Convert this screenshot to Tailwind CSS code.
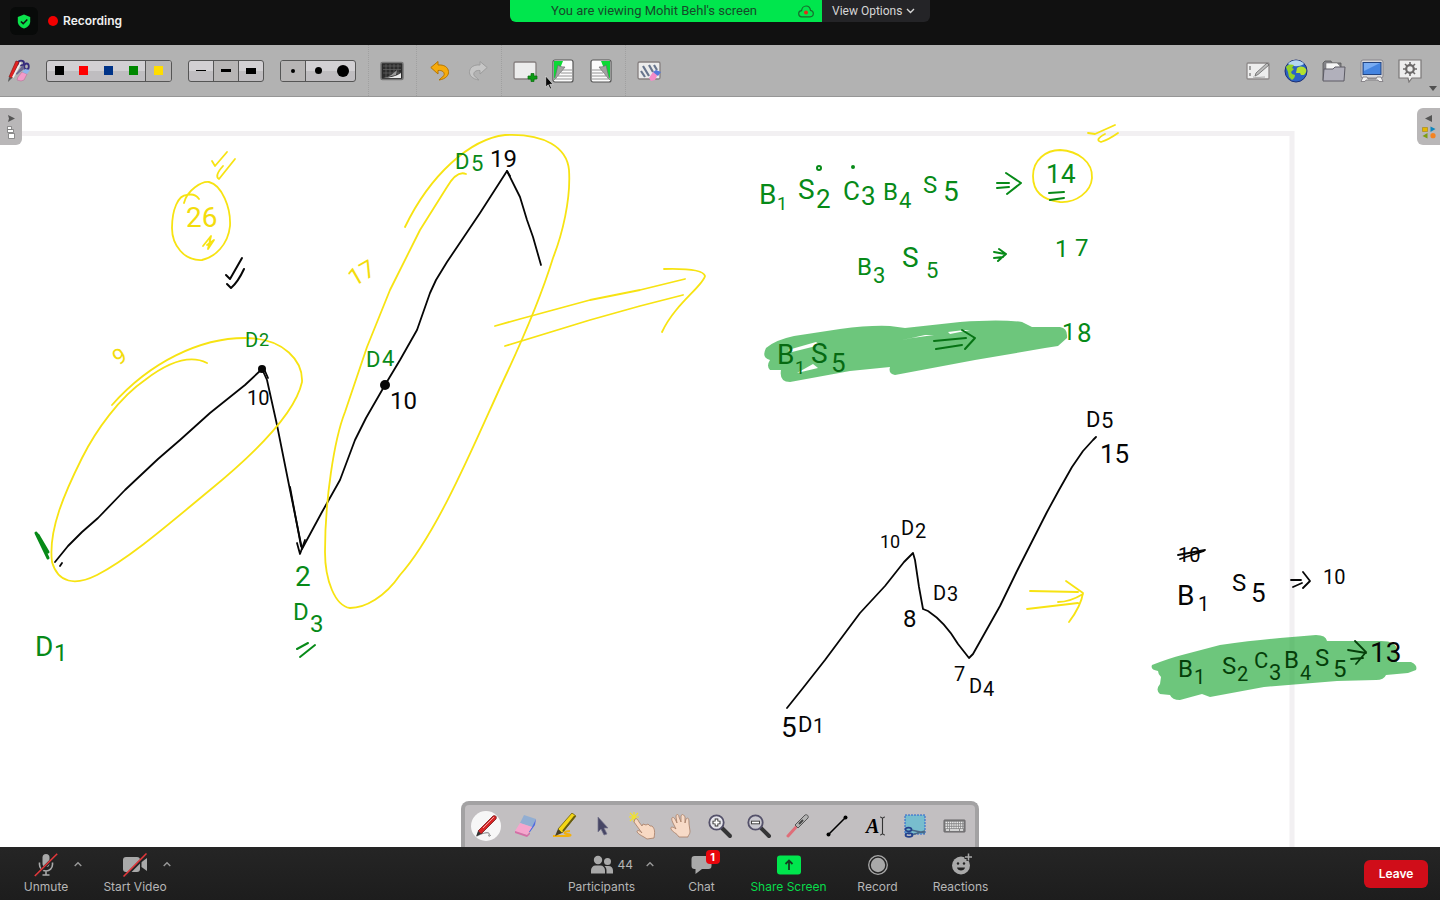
<!DOCTYPE html>
<html lang="en">
<head>
<meta charset="utf-8">
<meta name="viewport" content="width=device-width, initial-scale=1">
<title>Meeting - Shared whiteboard</title>
<script src="https://cdn.jsdelivr.net/npm/@tailwindcss/browser@4"></script>
</head>
<body class="flex h-screen flex-col overflow-hidden bg-white font-[Inter,sans-serif]">

<!-- Meeting header -->
<header class="relative flex h-[45px] shrink-0 items-center bg-[#111111] text-white">
  <button aria-label="Meeting security" class="ml-[10px] mt-[-3px] flex h-7 w-7 items-center justify-center rounded-md bg-[#080a09]">
    <svg width="14" height="15" viewBox="0 0 14 15"><path d="M7 .5 13.2 3v4.500c0 3.400-2.700 5.800-6.200 7C3.500 13.300.8 10.900.8 7.500V3z" fill="#0be34c"/><path d="m3.900 7.500 2.300 2.200 4.100-4.200" fill="none" stroke="#111" stroke-width="1.600"/></svg>
  </button>
  <span class="ml-[10px] mt-[-3px] h-[10px] w-[10px] rounded-full bg-[#f20000]"></span>
  <span class="ml-[5px] mt-[-3px] text-xs leading-4 font-semibold text-[#f0f0f0]">Recording</span>
  <div class="absolute top-0 left-1/2 flex h-[22px] w-[420px] -translate-x-1/2 overflow-hidden rounded-b-md font-[Roboto,sans-serif]">
    <div class="flex w-[312px] items-center justify-between bg-[#00e64d] pr-2 pl-[41px] text-[#174a2a]">
      <span class="text-[13px] leading-4 whitespace-nowrap">You are viewing Mohit Behl's screen</span>
      <svg width="16" height="13" viewBox="0 0 16 13" fill="none"><path d="M4 11.800a3.100 3.100 0 0 1-.4-6.200C3.800 3.200 5.600 1 8.100 1c2.400 0 4.100 1.800 4.400 4.400 1.600.2 2.800 1.500 2.800 3.200 0 1.800-1.400 3.200-3.200 3.200z" stroke="#176c2d" stroke-width="1.200"/><circle cx="8" cy="7.600" r="2" fill="#e32b1d"/></svg>
    </div>
    <button class="flex flex-1 items-center gap-1 bg-[#242427] pl-[10px] text-xs leading-4 text-[#d6d6d6]">View Options
      <svg width="9" height="6" viewBox="0 0 9 6"><path d="m1 1 3.500 3.500L8 1" fill="none" stroke="#d6d6d6" stroke-width="1.400"/></svg>
    </button>
  </div>
</header>

<!-- Whiteboard toolbar -->
<nav aria-label="Whiteboard" class="relative z-10 flex h-[52px] shrink-0 items-center border-b border-[#969696] bg-[#b2b2b2]">
  <button aria-label="Stylus tools" class="flex w-[38px] justify-center">
    <svg width="24" height="24" viewBox="0 0 24 24"><g fill="none" stroke="#352b7c" stroke-width="1.800"><ellipse cx="14" cy="4" rx="3" ry="2.400"/><ellipse cx="19.500" cy="7.500" rx="2.300" ry="3"/></g><path d="m16 7-6 8M17 9l-8 6" stroke="#6b6790" stroke-width="1.800"/><path d="m9 2 3 1-7 16-3-1z" fill="#e32222" stroke="#8d1515" stroke-width=".7"/><path d="m2 18 3 1-4 4z" fill="#555"/><path d="m13 3 1.500 1-8 15-1.500-1z" fill="#eee"/><path d="m11 18 4-5 5 2-3 6-3 1-4-1z" fill="#f39bc9" stroke="#b26990" stroke-width=".5"/><path d="m15 13 3-3 5 1-3 4z" fill="#8fb5ea"/></svg>
  </button>
  <div role="group" aria-label="Pen colour" class="ml-[8px] flex h-[22px] w-[126px] overflow-hidden rounded-[3px] border border-[#555] bg-linear-to-b from-[#d2d0d3] from-50% to-[#bfbdc0] to-50%">
    <button aria-label="Black" class="flex flex-1 items-center justify-center"><span class="h-[9px] w-[9px] bg-black"></span></button>
    <button aria-label="Red" class="flex flex-1 items-center justify-center"><span class="h-[9px] w-[9px] bg-[#ff0000]"></span></button>
    <button aria-label="Blue" class="flex flex-1 items-center justify-center"><span class="h-[9px] w-[9px] bg-[#003388]"></span></button>
    <button aria-label="Green" class="flex flex-1 items-center justify-center"><span class="h-[9px] w-[9px] bg-[#008800]"></span></button>
    <button aria-label="Yellow" class="flex flex-1 items-center justify-center border-l border-[#555] bg-[#b7b5b5]"><span class="h-[9px] w-[9px] bg-[#ffdd00]"></span></button>
  </div>
  <div role="group" aria-label="Line width" class="ml-4 flex h-[22px] w-[76px] overflow-hidden rounded-[3px] border border-[#555] bg-linear-to-b from-[#d2d0d3] from-50% to-[#bfbdc0] to-50%">
    <button aria-label="Thin" class="flex flex-1 items-center justify-center"><span class="h-px w-[10px] bg-black"></span></button>
    <button aria-label="Medium" class="flex flex-1 items-center justify-center border-x border-[#555] bg-[#b7b5b5]"><span class="h-[3px] w-[10px] bg-black"></span></button>
    <button aria-label="Thick" class="flex flex-1 items-center justify-center"><span class="h-[6px] w-[10px] bg-black"></span></button>
  </div>
  <div role="group" aria-label="Eraser size" class="ml-4 flex h-[22px] w-[76px] overflow-hidden rounded-[3px] border border-[#555] bg-linear-to-b from-[#d2d0d3] from-50% to-[#bfbdc0] to-50%">
    <button aria-label="Small" class="flex flex-1 items-center justify-center border-r border-[#555] bg-[#b7b5b5]"><span class="h-1 w-1 rounded-full bg-black"></span></button>
    <button aria-label="Middle" class="flex flex-1 items-center justify-center"><span class="h-[7px] w-[7px] rounded-full bg-black"></span></button>
    <button aria-label="Large" class="flex flex-1 items-center justify-center"><span class="h-3 w-3 rounded-full bg-black"></span></button>
  </div>
  <div class="ml-3 flex h-full items-center border-l border-dotted border-[#a0a0a0] pr-[5px] pl-1">
    <button aria-label="Backgrounds" class="flex w-[38px] justify-center">
      <svg width="24" height="20" viewBox="0 0 24 20"><rect x="1" y="1.500" width="22" height="17" rx="1.500" fill="#2c2c2c" stroke="#777" stroke-width="1.500"/><path d="M3 5h18M3 8.500h18M3 12h18M6 3v14M10 3v14M14 3v14M18 3v14" stroke="#666" stroke-width=".7"/><path d="M3 17c8-.5 14-2 18-5v5z" fill="#e9e9e9"/><path d="M3 17c6-1 10-4 14-8l-1 5z" fill="#999"/></svg>
    </button>
  </div>
  <div class="flex h-full items-center border-l border-dotted border-[#a0a0a0] px-1">
    <button aria-label="Undo" class="flex w-[38px] justify-center">
      <svg width="20" height="22" viewBox="0 0 20 22"><path d="M8 1.500.8 7.500 8 14v-3.500c4-.5 7 1.500 6 5L9 20c7-1 10-5 9.500-8.500C18 7 14 4.500 8 5z" fill="#f6ab0c" stroke="#b67500" stroke-width="1" stroke-linejoin="round"/></svg>
    </button>
    <button aria-label="Redo" class="flex w-[38px] justify-center">
      <svg width="20" height="22" viewBox="0 0 20 22"><path d="m12 1.500 7.200 6L12 14v-3.500c-4-.5-7 1.500-6 5l5 4.500c-7-1-10-5-9.500-8.500C2 7 6 4.500 12 5z" fill="#c6c6c6" stroke="#9c9c9c" stroke-width="1" stroke-linejoin="round"/></svg>
    </button>
  </div>
  <div class="flex h-full items-center border-l border-dotted border-[#a0a0a0] pr-[5px] pl-1">
    <button aria-label="New page" class="flex w-[38px] justify-center">
      <svg width="25" height="22" viewBox="0 0 25 22"><rect x="1" y="2" width="22" height="17" rx="1.500" fill="#ececec" stroke="#857f7f" stroke-width="1.300"/><path d="M18 13.500h3V16h3v3h-3v2.500h-3V19h-3v-3h3z" fill="#0c9b14" stroke="#066b0b" stroke-width=".7"/></svg>
    </button>
    <button aria-label="Previous page" class="flex w-[38px] justify-center">
      <svg width="22" height="24" viewBox="0 0 22 24"><rect x="1" y="1" width="20" height="22" rx="2" fill="#fbfbfb" stroke="#555" stroke-width="1.200"/><path d="M2 2h9L7 12l-5 8z" fill="#0cd936"/><path d="M9 11h11M9 14h11M6 17h14M4 20h16" stroke="#888" stroke-width=".9"/><path d="M6 6c1 1 3 2 7 2L2.500 21z" fill="#a2a2a2" stroke="#666" stroke-width=".6"/></svg>
    </button>
    <button aria-label="Next page" class="flex w-[38px] justify-center">
      <svg width="22" height="24" viewBox="0 0 22 24"><rect x="1" y="1" width="20" height="22" rx="2" fill="#fbfbfb" stroke="#555" stroke-width="1.200"/><path d="M11 2h9v18l-5-8z" fill="#0cd936"/><path d="M2 11h11M2 14h11M2 17h14M2 20h16" stroke="#888" stroke-width=".9"/><path d="M16 6c-1 1-3 2-7 2l10.500 13z" fill="#a2a2a2" stroke="#666" stroke-width=".6"/></svg>
    </button>
  </div>
  <div class="flex h-full items-center border-l border-dotted border-[#a0a0a0] px-1">
    <button aria-label="Erase page" class="flex w-[38px] justify-center">
      <svg width="25" height="22" viewBox="0 0 25 22"><rect x="1" y="2" width="22" height="17" rx="1.500" fill="#ececec" stroke="#857f7f" stroke-width="1.300"/><path d="m4 11 4 6M6 6l6 10M12 5l4 7M17 5l3 5" stroke="#68758d" stroke-width="2.200"/><path d="m12 18 4-6 5 2-3 6-4 1z" fill="#f58cc8"/><path d="m16 12 3-2 5 2-3 4z" fill="#5578dc"/></svg>
    </button>
  </div>
  <div class="ml-auto flex items-center pr-[11px]">
    <button aria-label="Board" class="flex w-[38px] justify-center">
      <svg width="25" height="20" viewBox="0 0 25 20"><rect x="1" y="2" width="22" height="16" rx="1" fill="#ededed" stroke="#8d8989" stroke-width="1.300"/><path d="M4 5v4M4 12v3" stroke="#999" stroke-width="1.800"/><path d="M7 16c4 1 8 0 12 0" stroke="#aaa" fill="none"/><path d="m9 15 1-3L21 2l2 2-11 9.500z" fill="#bbb" stroke="#666" stroke-width=".8"/></svg>
    </button>
    <button aria-label="Web" class="flex w-[38px] justify-center">
      <svg width="24" height="24" viewBox="0 0 24 24"><circle cx="12" cy="12" r="11" fill="#2b62c4" stroke="#1d2f72"/><path d="M4 5c4-5 12-5 16 0-5 3-11 3-16 0z" fill="#b4d7f2"/><path d="M2 8c2-3 5-3 8-2l-2 3 2 1-3 3 1 2 3 1c0 3-2 4-3 5l-3-3-1-5z" fill="#93d226"/><path d="M13 9c3-2 6-2 9 1 1 3-1 5-2 6h-3l-1-2h-4z" fill="#b2e030"/></svg>
    </button>
    <button aria-label="Documents" class="flex w-[38px] justify-center">
      <svg width="26" height="24" viewBox="0 0 26 24"><path d="M2 21V4l2-2h6l1 2h9v17z" fill="#848489" stroke="#555" stroke-width=".8"/><path d="M5 4h11l3 3v5H5z" fill="#f5f5f5" stroke="#777" stroke-width=".6"/><path d="M2 22 3 10h9l2-2h10l-1 14z" fill="#b1b0bb" stroke="#5c5b64"/></svg>
    </button>
    <button aria-label="Desktop" class="flex w-[38px] justify-center">
      <svg width="26" height="24" viewBox="0 0 26 24"><rect x="2" y="1" width="22" height="18" rx="2" fill="#d7d7da" stroke="#88858a"/><rect x="4" y="3.500" width="18" height="12" fill="#4484e0" stroke="#24447e"/><path d="M5 4h16L5 12z" fill="#79acf2"/><path d="M2 22.500 4 18h4l1 2h8l1-2h4l2 4.500h-4L19 21H7l-1 1.500z" fill="#f2f2f2" stroke="#77747a" stroke-width=".8"/></svg>
    </button>
    <button aria-label="Preferences" class="flex w-[38px] justify-center">
      <svg width="26" height="24" viewBox="0 0 26 24"><path d="M2 1h22v18H15l-3 4-1-4H2z" fill="#eeeeee" stroke="#7a7777" stroke-width="1.200"/><g stroke="#6c6a6a" fill="none"><circle cx="13" cy="10" r="3.800" stroke-width="2.200"/><path d="M13 3v3M13 14v3M6 10h3M17 10h3M8 5l2 2M16 13l2 2M18 5l-2 2M8 15l2-2" stroke-width="1.600"/></g></svg>
    </button>
  </div>
  <svg class="absolute right-[3px] bottom-[5px]" width="8" height="5" viewBox="0 0 8 5"><path d="M0 0h8L4 5z" fill="#505050"/></svg>
  <svg class="absolute top-[30px] left-[545px]" width="9" height="15" viewBox="0 0 9 15"><path d="M.7 1v11l2.500-2.200 1.900 4.200 1.500-.7-1.900-4H8z" fill="#080808" stroke="#eee" stroke-width=".6"/></svg>
</nav>

<!-- Board with pen strokes -->
<main class="relative min-h-0 flex-1 overflow-hidden bg-white">
  <svg class="h-full w-full" viewBox="0 97 1440 750" preserveAspectRatio="xMinYMin meet" role="img" aria-label="Wave chart notes">
    <path d="M0 133.500H1292V847" fill="none" stroke="#f2f0f2" stroke-width="5"/>

    <!-- highlighter -->
    <g fill="#0ca025" fill-opacity=".6">
      <path fill-rule="evenodd" d="M766 348Q775 340 794 336L840 329Q870 325 890 326L905 328 960 322Q1000 319 1022 322L1032 327 1060 327Q1068 328 1067 338L1058 346 1045 348 975 360 895 375Q888 374 890 367L850 371 790 382Q779 382 781 370L770 370Q766 366 770 360 761 358 766 348zM898 341 925 335 934 335 912 338zM788 350 816 342 820 345 792 352zM797 373 813 364 818 368zM948 332 964 330 970 330 950 334z"/>
      <path d="M1152 665Q1170 658 1182 655L1220 645Q1255 640 1280 638L1316 635Q1326 635 1327 641L1378 641Q1398 640 1397 652L1397 662 1411 662Q1418 665 1416 670L1408 673 1386 675Q1384 680 1376 680L1337 681 1264 687 1210 697 1202 694 1180 700Q1172 700 1170 695L1160 694Q1155 690 1160 684L1161 677Q1158 674 1158 671 1150 670 1152 665z"/>
    </g>

    <!-- black strokes -->
    <g fill="none" stroke="#060606" stroke-width="1.800" stroke-linecap="round" stroke-linejoin="round">
      <path d="M55 562 68 546 82 532 98 518 125 490 158 459 180 440 210 413 245 385 262 369 267 380 277 425 290 490 302 549 322 512 340 480 355 440 366 418 385 385 400 360 417 330 430 293 436 280 447 262 480 213 507 171 520 197 527 220 533 237 541 265"/>
      <path d="M265 371 268 378M290 487 301 546M297 543 300 554 305 540M60 566 62 563M507 171 510 176"/>
      <path d="M226 275 230 279 242 258M227 284 231 288Q238 282 244 269" stroke-width="2"/>
      <path d="M787 708 803 688 825 660 860 613 885 586 904 562 913 553 915 560 919 587 923 609 928 611Q945 622 958 644L969 658 973 654 982 638 1000 606 1017 571 1047 512 1059 490 1072 467 1083 451 1093 440 1096 437"/>
      <path d="M1178 555 1205 550M1180 559 1204 551M1291 580 1301 580M1293 587 1302 583M1303 572 1310 581 1303 588"/>
    </g>
    <g fill="#060606"><circle cx="262" cy="369" r="4"/><circle cx="385" cy="385" r="5"/></g>
    <g fill="none" stroke="#053f0a" stroke-width="1.800" stroke-linecap="round"><path d="M1348 650 1366 653M1351 659 1363 658M1355 641 1366 652 1356 664"/></g>

    <!-- yellow strokes -->
    <g fill="none" stroke="#f7e312" stroke-width="1.800" stroke-linecap="round" stroke-linejoin="round">
      <path d="M112 405C150 362 200 338 245 338C285 338 303 362 302 382C296 410 265 445 210 490C170 523 130 558 97 575C75 586 58 583 52 562C48 530 65 492 82 458C96 430 120 397 145 380C175 357 195 357 207 363"/>
      <path d="M405 227C430 175 470 139 505 135C545 133 567 148 569 170C571 200 562 235 553 258C540 300 520 345 505 377C480 430 440 530 400 575C385 597 365 608 350 608C335 606 325 580 325 552C325 500 334 440 345 412L367 347 390 290 420 230 447 187Q457 170 466 174"/>
      <path d="M184 203C187 190 202 181 209 182C222 185 231 208 230 226C228 245 215 257 202 260C184 261 172 245 172 228C172 210 178 195 187 195Q195 193 199 199"/>
      <path d="M212 161 215 166 227 152M223 166Q214 176 219 179L235 159M203 246 211 236 208 249 214 240 207 245"/>
      <path d="M495 326 520 319 590 300 640 290 685 279M505 346 590 320 640 306 683 295M664 269Q703 268 705 276C703 286 675 304 662 332"/>
      <path d="M1033 176C1033 160 1046 150 1060 150C1078 151 1093 162 1092 178C1091 192 1076 203 1060 202C1042 200 1033 192 1033 176"/>
      <path d="M1088 133 1095 134 1115 125M1105 134Q1094 140 1101 142 1108 140 1118 133"/>
      <path d="M1030 591 1078 592M1027 609 1078 603M1058 602Q1070 602 1083 594M1066 581 1083 593Q1081 606 1069 622"/>
    </g>

    <!-- green strokes -->
    <g fill="none" stroke="#078a18" stroke-width="2" stroke-linecap="round" stroke-linejoin="round">
      <path d="M36 533 48 558M38 535 48 552" stroke-width="3"/>
      <path d="M297 649 308 643M300 657 315 645"/>
      <path d="M997 183 1009 183M997 188 1009 187M1006 173 1021 183 1007 194M1049 193 1064 192M1050 200 1064 198"/>
      <path d="M994 252 1005 254M994 258 1003 257M999 249 1006 254 998 261"/>
      <path d="M934 341 966 338M936 349 962 345M962 330 975 338 965 349" stroke="#067314"/>
      <circle cx="819" cy="168" r="2"/><circle cx="853" cy="167" r="1"/>
    </g>

    <!-- labels -->
    <g class="font-[Roboto,sans-serif] text-[24px]" fill="#078a18">
      <text x="245" y="347" class="text-[20px]">D<tspan x="259" y="346" class="text-[18px]">2</tspan></text>
      <text x="366" y="367" class="text-[22px]">D<tspan x="382" y="366">4</tspan></text>
      <text x="455" y="169" class="text-[22px]">D<tspan x="471" y="171">5</tspan></text>
      <text x="35" y="656" class="text-[28px]">D<tspan x="54" y="661" class="text-[24px]">1</tspan></text>
      <text x="295" y="586" class="text-[28px]">2</text>
      <text x="293" y="620">D<tspan x="310" y="632">3</tspan></text>
      <text x="759" y="204" class="text-[28px]">B<tspan x="777" y="210" class="text-[18px]">1</tspan></text>
      <text x="798" y="199" class="text-[28px]">S<tspan x="816" y="208" class="text-[26px]">2</tspan></text>
      <text x="843" y="200" class="text-[26px]">C<tspan x="861" y="205">3</tspan></text>
      <text x="883" y="200">B<tspan x="899" y="208" class="text-[22px]">4</tspan></text>
      <text x="923" y="193">S<tspan x="943" y="201" class="text-[28px]">5</tspan></text>
      <text x="1046" y="183" class="text-[26px]">1<tspan x="1061" y="183">4</tspan></text>
      <text x="857" y="275">B<tspan x="873" y="283" class="text-[22px]">3</tspan></text>
      <text x="902" y="267" class="text-[28px]">S<tspan x="926" y="278" class="text-[22px]">5</tspan></text>
      <text x="1055" y="257">1<tspan x="1075" y="256">7</tspan></text>
      <text x="1062" y="340">1<tspan x="1077" y="342" class="text-[26px]">8</tspan></text>
    </g>
    <g class="font-[Roboto,sans-serif] text-[28px]" fill="#066a12">
      <text x="777" y="364">B<tspan x="795" y="374" class="text-[18px]">1</tspan></text>
      <text x="811" y="363">S<tspan x="831" y="372" class="text-[26px]">5</tspan></text>
    </g>
    <g class="font-[Roboto,sans-serif] text-[24px]" fill="#053f0a">
      <text x="1178" y="677">B<tspan x="1194" y="684" class="text-[20px]">1</tspan></text>
      <text x="1222" y="674">S<tspan x="1237" y="681" class="text-[20px]">2</tspan></text>
      <text x="1254" y="668" class="text-[22px]">C<tspan x="1269" y="680">3</tspan></text>
      <text x="1284" y="668">B<tspan x="1300" y="680" class="text-[20px]">4</tspan></text>
      <text x="1315" y="666">S<tspan x="1333" y="677">5</tspan></text>
      <text x="1370" y="662" class="text-[28px]" fill="#060606">13</text>
    </g>
    <g class="font-[Roboto,sans-serif] text-[20px]" fill="#060606">
      <text x="247" y="405">10</text>
      <text x="390" y="409" class="text-[24px]">10</text>
      <text x="490" y="167" class="text-[24px]">19</text>
      <text x="880" y="548" class="text-[18px]">10</text>
      <text x="901" y="535">D<tspan x="915" y="538">2</tspan></text>
      <text x="933" y="600">D<tspan x="947" y="601">3</tspan></text>
      <text x="903" y="627" class="text-[24px]">8</text>
      <text x="954" y="681">7</text>
      <text x="969" y="693">D<tspan x="983" y="696">4</tspan></text>
      <text x="1086" y="427" class="text-[22px]">D<tspan x="1101" y="428">5</tspan></text>
      <text x="1100" y="463" class="text-[26px]">15</text>
      <text x="781" y="737" class="text-[28px]">5</text>
      <text x="798" y="732" class="text-[22px]">D<tspan x="813" y="733" class="text-[20px]">1</tspan></text>
      <text x="1178" y="562">10</text>
      <text x="1177" y="605" class="text-[28px]">B<tspan x="1198" y="611" class="text-[20px]">1</tspan></text>
      <text x="1232" y="591" class="text-[24px]">S<tspan x="1251" y="602" class="text-[26px]">5</tspan></text>
      <text x="1323" y="584">10</text>
    </g>
    <g class="font-[Roboto,sans-serif]" fill="#f3dc0c">
      <text x="186" y="227" class="text-[28px]">26</text>
      <text x="118" y="366" transform="rotate(-30 118 366)" class="text-[22px]">9</text>
      <text x="354" y="287" transform="rotate(-30 354 287)" class="text-[24px]">17</text>
    </g>
  </svg>

  <button aria-label="Show pages" class="absolute top-[11px] left-0 flex h-[37px] w-[22px] flex-col items-center justify-center gap-1 rounded-r-md bg-[#b9b7b8]">
    <svg width="8" height="7" viewBox="0 0 8 7"><path d="m1 0 7 3.500L1 7l1-3.500z" fill="#555"/></svg>
    <svg width="8" height="13" viewBox="0 0 8 13"><path d="M.5.500h4v3h-4zM.5 3.500h6v3h-6zM1.500 7.500h6v5h-6z" fill="#fff" stroke="#777" stroke-width=".8"/></svg>
  </button>
  <button aria-label="Show library" class="absolute top-[11px] right-0 flex h-[37px] w-[23px] flex-col items-center justify-center gap-1 rounded-l-md bg-[#b9b7b8]">
    <svg width="8" height="7" viewBox="0 0 8 7"><path d="M7 0 0 3.500 7 7z" fill="#555"/></svg>
    <svg width="14" height="13" viewBox="0 0 14 13"><path d="M.5 1.500h5v4h-5z" fill="#e5b700" stroke="#9a7800" stroke-width=".5"/><path d="m8.500.500 5 2.500-5 3z" fill="#0d86bd"/><path d="M5.500 7v5.500L.5 10z" fill="#7d9d12"/><circle cx="11" cy="9.700" r="2.600" fill="#f48321"/></svg>
  </button>

  <!-- Stylus palette -->
  <div role="toolbar" aria-label="Stylus palette" class="absolute bottom-0 left-1/2 flex h-[46px] w-[518px] -translate-x-1/2 items-center justify-between rounded-t-lg border-4 border-b-0 border-[#a3a2a3] bg-[#c2bfc1] px-px">
    <button aria-label="Pen" class="flex w-[39px] justify-center"><svg width="30" height="30" viewBox="0 0 30 30"><circle cx="15" cy="15" r="15" fill="#f7f7f7"/><path d="M6 25c5-3 14-5 12-1-1 2 1 1 2 0" fill="none" stroke="#777"/><path d="m7 20 3 3L25 8c1-3-1-4-3-3z" fill="#d92526" stroke="#741818" stroke-width=".8"/><path d="m12 17 11-11" stroke="#f3a5a5" stroke-width="1"/><path d="m7 20 3 3-5 2.500z" fill="#333"/></svg></button>
    <button aria-label="Eraser" class="flex w-[39px] justify-center"><svg width="24" height="24" viewBox="0 0 24 24"><path d="m11 1 12 4-4 8-12-4z" fill="#92aed2"/><path d="m23 5-1 6-5 7-2 0 4-5z" fill="#506de0"/><path d="m7 9 12 4-5 8-12-4z" fill="#f6a5cd"/><path d="m2 17 12 4 3-3v2l-3 3-12-4z" fill="#d56da6"/></svg></button>
    <button aria-label="Highlighter" class="flex w-[39px] justify-center"><svg width="26" height="26" viewBox="0 0 26 26"><path d="M2 23h15c4 0 3-2-1-2s-3-3 3-3" fill="none" stroke="#f2b10d" stroke-width="2"/><path d="m7 16 4 4L25 3l-4-3z" fill="#f4d716" stroke="#705f08" stroke-width=".8"/><path d="m12 18 12-15" stroke="#665b11" stroke-width="2"/><path d="m7 16 4 4-7 3z" fill="#463f27"/></svg></button>
    <button aria-label="Select" class="flex w-[39px] justify-center"><svg width="12" height="20" viewBox="0 0 12 20"><path d="M1 1v15l3-3 3 6 3-1-3-6h4z" fill="#474665" stroke="#77758d" stroke-width=".7"/></svg></button>
    <button aria-label="Interact" class="flex w-[39px] justify-center"><svg width="28" height="28" viewBox="0 0 28 28"><path d="M6 0v10M1 5h10M2 1l8 8M10 1 2 9" stroke="#f1e22b" stroke-width="1.200"/><path d="M7 7c2-1 3 1 4 3l3 4 1-2 3 1 2-1 2 2 2 0c3 3 3 6 2 12l-7 1c-4-3-8-4-10-7 0-3 3-1 5 1L6 10z" fill="#f8d9c3" stroke="#a77e66" stroke-width=".8"/></svg></button>
    <button aria-label="Hand" class="flex w-[39px] justify-center"><svg width="22" height="24" viewBox="0 0 22 24"><path d="M3 9C0 3 3 2 5 5l2 4L6 3c0-4 3-3 3 0l2 5 0-6c1-3 3-1 4 1l0 6 1-4c3-3 3 2 3 5l1 7c0 4-2 4-2 6h-9c-2-4-7-5-8-8-1-3 3-2 5 0z" fill="#f7dac7" stroke="#a77e66" stroke-width=".8"/></svg></button>
    <button aria-label="Zoom in" class="flex w-[39px] justify-center"><svg width="26" height="26" viewBox="0 0 26 26"><path d="m14 14 9 9" stroke="#353536" stroke-width="4" stroke-linecap="round"/><circle cx="9.500" cy="9.500" r="7.200" fill="#e7e7ed" stroke="#54516a" stroke-width="1.800"/><path d="M9.500 5.500v8M5.500 9.500h8" stroke="#333" stroke-width="3.600"/><path d="M9.500 6.500v6M6.500 9.500h6" stroke="#fff" stroke-width="1.800"/></svg></button>
    <button aria-label="Zoom out" class="flex w-[39px] justify-center"><svg width="26" height="26" viewBox="0 0 26 26"><path d="m14 14 9 9" stroke="#353536" stroke-width="4" stroke-linecap="round"/><circle cx="9.500" cy="9.500" r="7.200" fill="#c9c8cf" stroke="#54516a" stroke-width="1.800"/><path d="M5 9.500h9" stroke="#444" stroke-width="3.600"/><path d="M6 9.500h7" stroke="#fff" stroke-width="1.600"/></svg></button>
    <button aria-label="Laser pointer" class="flex w-[39px] justify-center"><svg width="24" height="26" viewBox="0 0 24 26"><path d="m2 23 9-10" stroke="#df6d78" stroke-width="3" stroke-linecap="round"/><path d="m9 12 3 3L22 5c1-2-1-4-3-3z" fill="#b2b2b2" stroke="#555"/><path d="m13 11 4-4" stroke="#444" stroke-width="2"/></svg></button>
    <button aria-label="Line" class="flex w-[39px] justify-center"><svg width="22" height="22" viewBox="0 0 22 22"><path d="M2.500 19.500 19.500 2.500" stroke="#000" stroke-width="1.600"/><circle cx="2.500" cy="19.500" r="2" /><circle cx="19.500" cy="2.500" r="2"/></svg></button>
    <button aria-label="Text" class="flex w-[39px] items-center justify-center font-[Liberation_Serif,serif] text-xl leading-6 font-bold italic">A<svg width="7" height="20" viewBox="0 0 7 20"><path d="M1 1c1 0 2 .5 2.500 1.500C4 1.500 5 1 6 1M3.500 2.500v15M1 19c1 0 2-.5 2.500-1.500C4 18.500 5 19 6 19" fill="none" stroke="#333" stroke-width="1.100"/></svg></button>
    <button aria-label="Capture" class="flex w-[39px] justify-center"><svg width="22" height="24" viewBox="0 0 22 24"><rect x="1" y="1" width="20" height="19" fill="#78bdce" stroke="#2762cf" stroke-dasharray="2 1"/><path d="m7 16 14 3M7 21l14-4" stroke="#4a6785" stroke-width="1.500"/><g fill="none" stroke="#24418b" stroke-width="1.700"><ellipse cx="4.500" cy="15.500" rx="3" ry="1.800"/><ellipse cx="5" cy="21" rx="3.500" ry="1.800"/></g></svg></button>
    <button aria-label="Keyboard" class="flex w-[39px] justify-center"><svg width="23" height="14" viewBox="0 0 23 14"><rect x="1" y="1" width="21" height="12" rx=".5" fill="#848485" stroke="#646265"/><path d="M2.500 3.500h18M2.500 6h18M2.500 8.500h18" stroke="#eee" stroke-width="1.500" stroke-dasharray="1.500 .7"/><path d="M3 11h3M7 11h9M17 11h3" stroke="#eee" stroke-width="1.500"/></svg></button>
  </div>
</main>

<!-- Meeting controls -->
<footer class="flex h-[53px] shrink-0 bg-linear-to-b from-[#252525] to-[#1d1d1d] text-xs leading-4 text-[#b6b6b6]">
  <div class="flex flex-1">
    <div class="relative flex w-[92px] justify-center">
      <button class="flex flex-col items-center pt-[6px]">
        <svg width="24" height="24" viewBox="0 0 24 24"><rect x="8.500" y="1" width="7" height="13" rx="3.500" fill="#a9a9a9"/><path d="M5.500 9.500v2a6.500 6.500 0 0 0 13 0v-2M12 18v4M8.500 22h7" fill="none" stroke="#a9a9a9" stroke-width="1.600"/><path d="M1 23.500 23.500 1" stroke="#252525" stroke-width="3"/><path d="M.8 23 23.200.800" stroke="#e5383b" stroke-width="1.500"/></svg>
        <span class="mt-[2px]">Unmute</span>
      </button>
      <button aria-label="Audio options" class="absolute top-[14px] right-[10px]"><svg width="8" height="6" viewBox="0 0 8 6"><path d="m.7 5 3.300-3.300L7.300 5" fill="none" stroke="#999" stroke-width="1.400"/></svg></button>
    </div>
    <div class="relative flex w-[86px] justify-center">
      <button class="flex flex-col items-center pt-[6px]">
        <svg width="26" height="24" viewBox="0 0 26 24"><rect x="1" y="4" width="17" height="15" rx="3" fill="#a9a9a9"/><path d="m19.500 9 5.500-4v13l-5.500-4z" fill="#a9a9a9"/><path d="M2 24.500 25.500 1" stroke="#252525" stroke-width="3"/><path d="M1.500 23.500 24.500.500" stroke="#e5383b" stroke-width="1.500"/></svg>
        <span class="mt-[2px] whitespace-nowrap">Start Video</span>
      </button>
      <button aria-label="Video options" class="absolute top-[14px] right-[7px]"><svg width="8" height="6" viewBox="0 0 8 6"><path d="m.7 5 3.300-3.300L7.300 5" fill="none" stroke="#999" stroke-width="1.400"/></svg></button>
    </div>
  </div>
  <div class="flex pl-[115px]">
    <div class="relative flex w-[120px]">
      <button class="flex w-full flex-col items-center pt-[6px]">
        <span class="grid w-full grid-cols-[1fr_auto_1fr] items-center">
          <svg class="col-start-2" width="24" height="24" viewBox="0 0 24 24" fill="#a9a9a9"><circle cx="8" cy="7" r="4.200"/><path d="M1 20.500v-3c0-3 2-5 4.500-5h5c2.500 0 4.500 2 4.500 5v3z"/><circle cx="17.500" cy="8.500" r="3.500"/><path d="M14.500 13h4c2.800 0 4.500 2 4.500 4.500v3h-6.500v-3c0-2-.7-3.300-2-4.500z"/></svg>
          <span class="pl-1 text-left">44</span>
        </span>
        <span class="mt-[2px]">Participants</span>
      </button>
      <button aria-label="Participant options" class="absolute top-[14px] right-2"><svg width="8" height="6" viewBox="0 0 8 6"><path d="m.7 5 3.300-3.300L7.300 5" fill="none" stroke="#999" stroke-width="1.400"/></svg></button>
    </div>
    <button class="relative flex w-[80px] flex-col items-center pt-[6px]">
      <svg width="24" height="24" viewBox="0 0 24 24"><path d="M4.500 3h14a3 3 0 0 1 3 3v7a3 3 0 0 1-3 3H12l-6.500 5V16h-1a3 3 0 0 1-3-3V6a3 3 0 0 1 3-3z" fill="#a9a9a9"/></svg>
      <span class="mt-[2px]">Chat</span>
      <span class="absolute top-[3px] left-[44px] flex h-[14px] w-[14px] items-center justify-center rounded-sm bg-[#e8060d] text-[11px] leading-3 font-bold text-white">1</span>
    </button>
    <button class="flex w-[94px] flex-col items-center pt-[6px] text-[#08dc4b]">
      <svg width="24" height="24" viewBox="0 0 24 24"><rect y="2.500" width="24" height="19" rx="3" fill="#00e64d"/><path d="M12 17V7.500M8.500 11 12 7.500l3.500 3.500" fill="none" stroke="#153d20" stroke-width="1.800"/></svg>
      <span class="mt-[2px] whitespace-nowrap">Share Screen</span>
    </button>
    <button class="flex w-[84px] flex-col items-center pt-[6px]">
      <svg width="24" height="24" viewBox="0 0 24 24"><circle cx="12" cy="12" r="9.300" fill="none" stroke="#a9a9a9" stroke-width="1.300"/><circle cx="12" cy="12" r="7.200" fill="#a9a9a9"/></svg>
      <span class="mt-[2px]">Record</span>
    </button>
    <button class="flex w-[82px] flex-col items-center pt-[6px]">
      <svg width="24" height="24" viewBox="0 0 24 24"><circle cx="12" cy="12.500" r="9" fill="#a9a9a9"/><circle cx="9" cy="10.500" r="1.200" fill="#222"/><circle cx="15" cy="10.500" r="1.200" fill="#222"/><path d="M8 14.500h8c-.5 4-7.500 4-8 0z" fill="#222"/><path d="M19.500 0v8M15.500 4h8" stroke="#222" stroke-width="4"/><path d="M19.500.500v7M16 4h7" stroke="#a9a9a9" stroke-width="1.500"/></svg>
      <span class="mt-[2px]">Reactions</span>
    </button>
  </div>
  <div class="flex flex-1 items-center justify-end pr-3">
    <button class="h-7 w-16 rounded-md bg-[#d00d19] font-semibold text-white">Leave</button>
  </div>
</footer>
</body>
</html>
